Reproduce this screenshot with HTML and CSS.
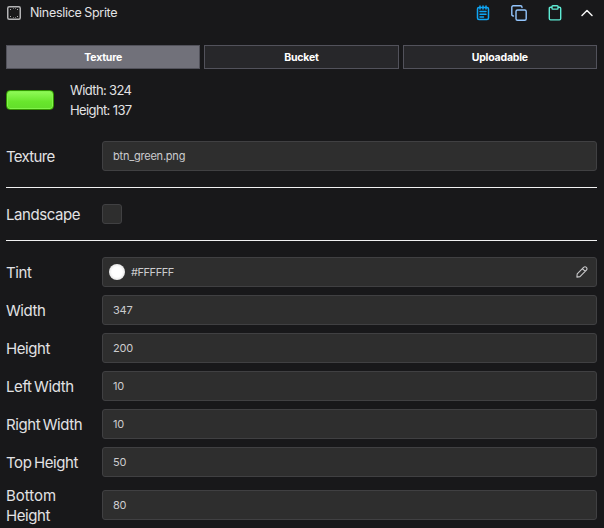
FILE: index.html
```html
<!DOCTYPE html>
<html lang="en">
<head>
<meta charset="utf-8">
<title>Nineslice Sprite</title>
<link rel="stylesheet" href="styles.css">
</head>
<body>
<main class="panel">
  <header class="header">
    <svg class="sprite-icon" width="14" height="14" viewBox="0 0 14 14" fill="none"><rect x=".75" y=".75" width="12.5" height="12.5" rx="1.5" stroke="#b4b4b6" stroke-width="1.5"/><path d="M3 3.5h1M6 2.5h.6M8 2.5h.6M10 3.5h1M3 10.5h1M6 11.5h.6M8 11.5h.6M10 10.5h1" stroke="#aaa"/></svg>
    <h1 class="title">Nineslice Sprite</h1>
    <div class="actions">
      <svg width="14" height="16" viewBox="0 0 14 16" fill="none" stroke="#0ea5f5" stroke-width="1.5" stroke-linecap="round"><rect x="1.5" y="2.5" width="11" height="12" rx="1.5"/><path d="M4 1v3M7 1v3M10 1v3M4 6.5h6M4 9.2h6M4 12h3.5"/></svg>
      <svg width="16" height="16" viewBox="0 0 16 16" fill="none" stroke="#93c5fd" stroke-width="1.4" stroke-linecap="round" stroke-linejoin="round"><rect x="5" y="5" width="10.2" height="10.2" rx="1.5"/><path d="M2.5 11h-.2Q.8 11 .8 9.5V2.3Q.8.8 2.3.8h7.2Q11 .8 11 2.3v.2"/></svg>
      <svg width="14" height="16" viewBox="0 0 14 16" fill="none" stroke="#5eead4" stroke-width="1.4" stroke-linejoin="round"><path d="M4 2.3H2.5Q1.3 2.3 1.3 3.5v10.1q0 1.3 1.2 1.3h9q1.2 0 1.2-1.3V3.5q0-1.2-1.2-1.2H10"/><rect x="4" y=".8" width="6" height="3.3" rx=".8"/></svg>
      <svg class="chevron" width="14" height="16" viewBox="0 0 14 16" fill="none" stroke="#f4f4f5" stroke-width="1.5" stroke-linecap="round" stroke-linejoin="round"><path d="m2 10.5 5-5 5 5"/></svg>
    </div>
  </header>

  <nav class="tabs">
    <button class="tab active">Texture</button>
    <button class="tab">Bucket</button>
    <button class="tab">Uploadable</button>
  </nav>

  <section class="preview">
    <div class="thumb"></div>
    <div class="size"><div>Width: 324</div><div>Height: 137</div></div>
  </section>

  <div class="row"><span class="label short">Texture</span><div class="field file">btn_green.png</div></div>
  <hr class="rule rule-top">
  <div class="row check-row"><span class="label">Landscape</span><div class="checkbox"></div></div>
  <hr class="rule">

  <section class="rows">
    <div class="row"><span class="label">Tint</span><div class="field tint"><i class="swatch"></i><span class="hex">#FFFFFF</span>
      <svg class="pencil" width="12" height="12" viewBox="0 0 12 12" fill="none" stroke="#c8c8ca" stroke-width="1.1" stroke-linejoin="round"><path d="M1.2 7.8 7.6 1.4Q9 .1 10.4 1.4q1.2 1.4 0 2.8L4 10.6l-3.1.5zM6.4 2.6l2.8 2.8"/></svg></div></div>
    <div class="row"><span class="label">Width</span><div class="field">347</div></div>
    <div class="row"><span class="label">Height</span><div class="field">200</div></div>
    <div class="row"><span class="label">Left Width</span><div class="field">10</div></div>
    <div class="row"><span class="label">Right Width</span><div class="field">10</div></div>
    <div class="row"><span class="label">Top Height</span><div class="field">50</div></div>
    <div class="row"><span class="label"><span class="wide">Bottom</span> Height</span><div class="field">80</div></div>
  </section>
</main>
</body>
</html>
```
FILE: styles.css
```css
* { box-sizing: border-box; }
body {
  margin: 0;
  height: 528px;
  overflow: hidden;
  background: #18181a;
  color: #e2e2e4;
  font-family: Inter, "Liberation Sans", sans-serif;
}
.panel { padding: 0 7px 0 6px; }
.header { display: flex; align-items: center; height: 26px; padding-left: 1px; }
.title { margin: 0 0 0 9px; font-size: 12.5px; font-weight: 400; line-height: 20px; letter-spacing: -.3px; word-spacing: -.5px; }
.actions { display: flex; gap: 21px; margin: 0 3px 0 auto; }
.actions svg { display: block; }
.actions .chevron { margin-left: -3px; }
.tabs { display: grid; grid-template-columns: repeat(3, 1fr); gap: 4px; margin-top: 19px; }
.tab {
  height: 24px;
  padding: 1px 0 0;
  border: 1px solid #52525b;
  background: #27272a;
  color: #fff;
  font: 700 10.5px/22px Inter, "Liberation Sans", sans-serif;
  letter-spacing: -.2px;
}
.tab.active { background: #71717a; }
.preview { display: flex; align-items: center; gap: 16px; height: 40px; margin: 11px 0 21px; }
.thumb {
  width: 48px;
  height: 20px;
  border: 1px solid #319500;
  border-radius: 4px;
  background: linear-gradient(#91fa59, #68e62c 60%, #62de2a);
  box-shadow: inset 0 0 0 1px #83f34d;
}
.size { font-size: 13px; line-height: 20px; letter-spacing: -.62px; }
.row { display: grid; grid-template-columns: 80px 1fr; column-gap: 16px; align-items: center; }
.label { font-size: 15px; line-height: 20px; letter-spacing: -.42px; word-spacing: -1.2px; padding-top: 1px; margin-bottom: -1px; }
.short { letter-spacing: -.7px; }
.wide { letter-spacing: 0; }
.field {
  display: flex;
  align-items: center;
  height: 30px;
  padding: 0 10px;
  border: 1px solid #404042;
  border-radius: 3px;
  background: #2e2e2e;
  color: #ccccce;
  font-size: 11px;
  letter-spacing: -.2px;
}
.file { letter-spacing: -.22px; }
.rule { height: 1px; margin: 0; border: 0; background: #f1f1f1; }
.rule-top { margin: 16px 0; }
.check-row { height: 20px; margin-bottom: 16px; }
.checkbox { width: 20px; height: 20px; border: 1px solid #404042; border-radius: 3px; background: #2e2e2e; }
.rows { display: grid; gap: 8px; margin-top: 16px; }
.tint { padding: 0 8px 0 6px; }
.swatch { width: 16px; height: 16px; border-radius: 50%; background: radial-gradient(#fff 45%, #e2e2e2 75%); }
.hex { margin-left: 6px; letter-spacing: -.45px; }
.pencil { margin-left: auto; }
```
